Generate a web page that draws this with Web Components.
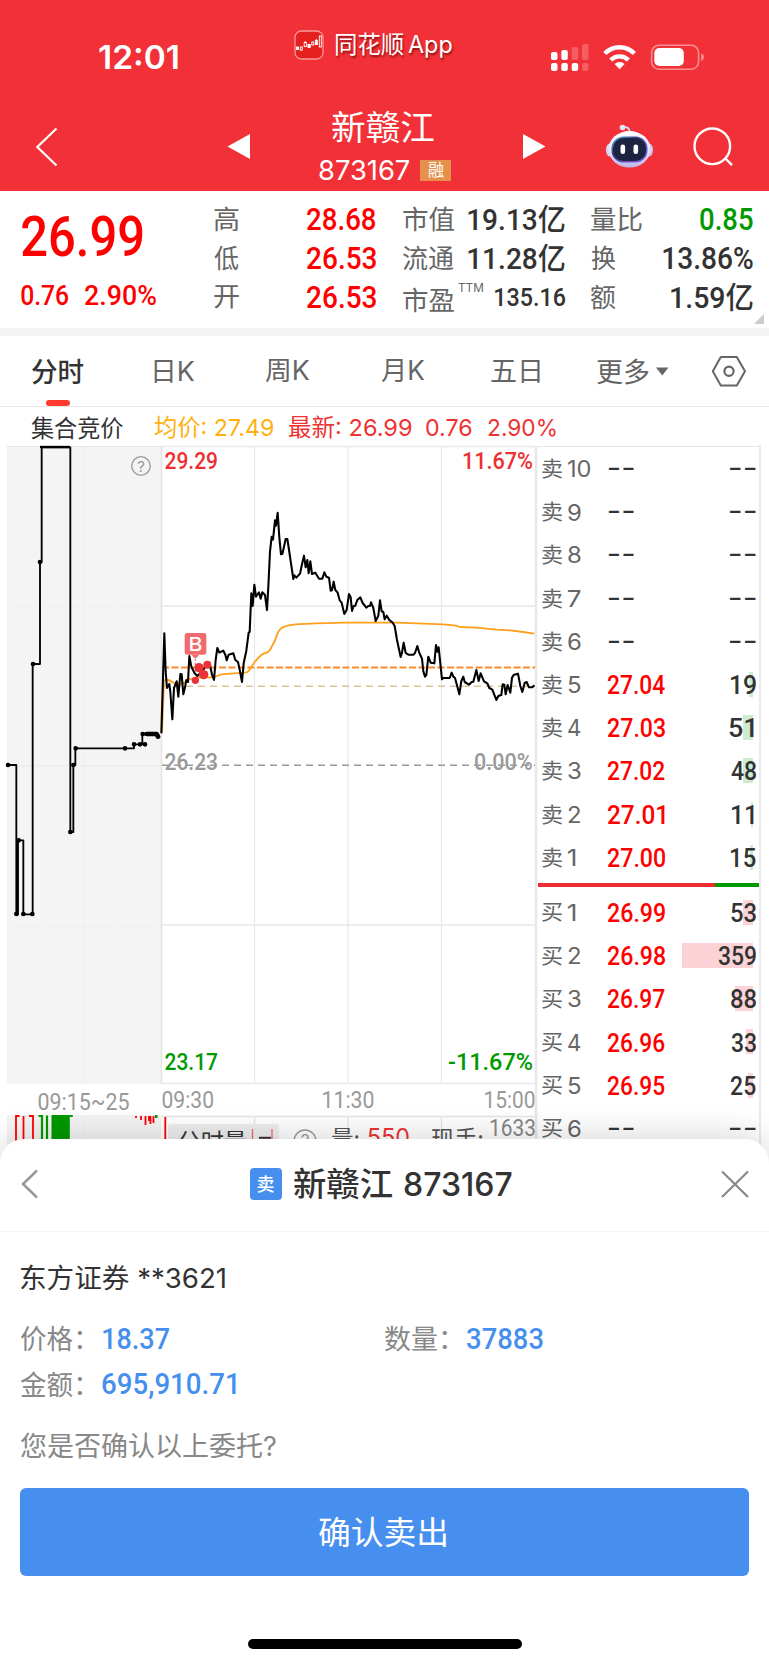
<!DOCTYPE html>
<html lang="zh-CN">
<head>
<meta charset="utf-8">
<title>新赣江 873167</title>
<style>
  html, body { margin: 0; padding: 0; background: #fff; }
  body { width: 769px; height: 1665px; overflow: hidden; font-family: Inter, "Noto Sans CJK SC", sans-serif; color: #333; }
</style>
</head>
<body>
<trade-screen></trade-screen>

<script>
/* Text whose box is its ink: w = drawn width, s = font size, f = din|ui, b = weight, ml = gap before */
const pen = document.createElement('canvas').getContext('2d');
const FACES = {
  din: 'Roboto, "Noto Sans CJK SC", sans-serif',
  ui: 'Inter, "Noto Sans CJK SC", sans-serif'
};
class FitText extends HTMLElement {
  connectedCallback() {
    if (this.shadowRoot) return;
    const root = this.attachShadow({ mode: 'open' });
    const size = +this.getAttribute('s') || 24;
    const weight = this.getAttribute('b') || 400;
    const face = FACES[this.getAttribute('f') || 'ui'];
    const ml = this.getAttribute('ml') || 0;
    const text = this.textContent;
    pen.font = `${weight} ${size}px ${face}`;
    const m = pen.measureText(text);
    const inkW = m.actualBoundingBoxLeft + m.actualBoundingBoxRight;
    const inkH = m.actualBoundingBoxAscent + m.actualBoundingBoxDescent;
    const w = +this.getAttribute('w') || inkW;
    const k = w / inkW;
    const line = Math.ceil(size * 1.4);
    const a = m.fontBoundingBoxAscent, d = m.fontBoundingBoxDescent;
    const base = (line - a - d) / 2 + a;
    root.innerHTML = `<style>
      :host { display: block; flex: none; width: ${w}px; height: ${inkH}px; margin-left: ${ml}px; }
      span { display: block; width: max-content; white-space: pre; font: ${weight} ${size}px/${line}px ${face};
        transform-origin: 0 0;
        transform: translate(${m.actualBoundingBoxLeft * k}px, ${m.actualBoundingBoxAscent - base}px) scaleX(${k}); }
    </style><span><slot></slot></span>`;
  }
}
customElements.define('fit-text', FitText);

const define = (name, html) => {
  const t = document.createElement('template');
  t.innerHTML = html;
  customElements.define(name, class extends HTMLElement {
    constructor() {
      super();
      this.attachShadow({ mode: 'open' }).append(t.content.cloneNode(true));
    }
  });
};

define('status-bar', `
<style>
  :host { display: flex; height: 88px; color: #fff; align-items: flex-start; }
  .time { margin: 45px 0 0 99px; }
  .app { margin: 29px 0 0 116px; display: flex; align-items: center; height: 31px; text-shadow: 1px 2px 2px rgba(90,0,0,.65); }
  .app fit-text { margin-top: 1px; }
  .sys { margin: 43px 0 0 95px; }
  svg { display: block; flex: none; }
</style>
<div class="time"><fit-text w="79" s="33" b="600">12:01</fit-text></div>
<div class="app">
  <svg width="30" height="30" viewBox="0 0 30 30">
    <rect x="1" y="1" width="28" height="28" rx="6.5" fill="#e5201f" stroke="#f79a9b" stroke-width="1.3"/>
    <g stroke="#fff" stroke-width=".9" fill="none">
      <rect x="2.5" y="17" width="2" height="2.5" fill="#fff"/><rect x="6.3" y="17" width="2" height="3"/>
      <rect x="10.2" y="12.5" width="2.2" height="4"/><rect x="14" y="14.5" width="2.2" height="3" fill="#fff"/>
      <rect x="17.8" y="12" width="2" height="3"/><rect x="21.4" y="10.5" width="2" height="4" fill="#fff"/>
      <rect x="25.3" y="6" width="2" height="11"/><path d="M7.3 20v1M11.3 11v1.5M22.4 9v2"/>
    </g>
  </svg>
  <fit-text w="119" s="24" ml="12" style="word-spacing:-3px">同花顺 App</fit-text>
</div>
<svg class="sys" width="156" height="30" viewBox="550 43 156 30">
  <g fill="#fff">
    <rect x="551" y="52" width="6.5" height="8" rx="2"/><rect x="561.3" y="50" width="6.5" height="10" rx="2"/>
    <rect x="551" y="63" width="6.5" height="8" rx="2"/><rect x="561.3" y="63" width="6.5" height="8" rx="2"/><rect x="571.7" y="63" width="6.5" height="8" rx="2"/>
    <g opacity=".22"><rect x="571.7" y="47" width="6.5" height="13" rx="2"/><rect x="582" y="44" width="6.5" height="16" rx="2"/><rect x="582" y="63" width="6.5" height="8" rx="2"/></g>
  </g>
  <g fill="none" stroke="#fff" stroke-width="4.4">
    <path d="M604.8 53.5a20.5 20.5 0 0 1 29.6 0"/><path d="M610.8 60a12.5 12.5 0 0 1 17.6 0"/>
  </g>
  <path d="M619.6 69.3l-5-5.2a7.3 7.3 0 0 1 10 0z" fill="#fff"/>
  <rect x="651.6" y="45.2" width="47" height="24" rx="7.5" fill="none" stroke="#fff" stroke-opacity=".45" stroke-width="1.6"/>
  <rect x="654.3" y="48" width="29.5" height="18" rx="5" fill="#fff"/>
  <path d="M701.3 53.5c3.4 1 3.4 6.200 0 7.200z" fill="#fff" opacity=".5"/>
</svg>`);

define('stock-nav', `
<style>
  :host { display: flex; height: 103px; color: #fff; align-items: flex-start; }
  svg { display: block; flex: none; }
  .title { display: flex; flex-direction: column; width: 134px; margin-left: 69px; }
  .name { margin: 22px 0 0 13px; }
  .code { display: flex; align-items: center; height: 22px; margin-top: 15px; }
  .badge { background: #e5914b; width: 31px; height: 21px; margin-left: 11px; display: flex; align-items: center; justify-content: center; }
</style>
<svg style="margin:39px 0 0 34px" width="26" height="42" viewBox="34 127 26 42"><path d="M56.500 128.500L37.300 147l19.200 18.500" fill="none" stroke="#fff" stroke-width="2.200"/></svg>
<svg style="margin:44px 0 0 167px" width="23" height="28" viewBox="227 132 23 28"><path d="M227.500 146.500L250 134v25z" fill="#fff"/></svg>
<div class="title">
  <div class="name"><fit-text w="102" s="34">新赣江</fit-text></div>
  <div class="code"><fit-text w="90" s="27">873167</fit-text><div class="badge"><fit-text w="16" s="17">融</fit-text></div></div>
</div>
<svg style="margin:44px 0 0 70px" width="23" height="28" viewBox="523 132 23 28"><path d="M545.500 146.500L523 134v25z" fill="#fff"/></svg>
<svg style="margin:36px 0 0 59px" width="50" height="46" viewBox="0 0 50 46">
  <defs><linearGradient id="h" x1="0" y1="0" x2="0" y2="1"><stop offset="0" stop-color="#fff"/><stop offset=".6" stop-color="#e3e2f6"/><stop offset="1" stop-color="#b9b6e6"/></linearGradient>
  <linearGradient id="s" x1="0" y1="0" x2="1" y2="1"><stop offset="0" stop-color="#55c3e8"/><stop offset=".35" stop-color="#3d3f86"/><stop offset="1" stop-color="#8f5bf0"/></linearGradient></defs>
  <path d="M18 3.500c4-1 6.500.5 6.800 4.500" fill="none" stroke="#d3dcef" stroke-width="1.800"/>
  <circle cx="17.500" cy="3.500" r="2.800" fill="#dfe9f7"/>
  <ellipse cx="4.500" cy="26" rx="3.500" ry="6.500" fill="#d9d5f1"/><ellipse cx="44.500" cy="26" rx="3.500" ry="6.500" fill="#c9c4ee"/>
  <ellipse cx="24.500" cy="25.300" rx="21" ry="18.300" fill="url(#h)"/>
  <rect x="6.500" y="12.500" width="36" height="26" rx="12" fill="url(#s)"/>
  <rect x="8" y="14" width="33" height="23" rx="10.500" fill="#1c2441"/>
  <rect x="15.500" y="20.500" width="4.600" height="9.500" rx="2.200" fill="#fff"/><rect x="28.500" y="20.500" width="4.600" height="9.500" rx="2.200" fill="#fff"/>
</svg>
<svg style="margin:38px 0 0 37px" width="42" height="42" viewBox="692 126 42 42"><g fill="none" stroke="#fff" stroke-width="2.400"><circle cx="712.300" cy="146.300" r="17.800"/><path d="M725.500 158.500l6.500 6.700"/></g></svg>`);

define('quote-panel', `
<style>
  :host { display: flex; height: 137px; border-bottom: 8px solid #f4f4f4; color: #333; position: relative; }
  .last { width: 214px; color: #f00; }
  .big { margin: 24px 0 0 22px; }
  .chg { display: flex; margin: 28px 0 0 21px; }
  .col { display: grid; grid-template-rows: 39px 39px 39px; padding-top: 8.500px; }
  .r { display: flex; align-items: center; justify-content: space-between; }
  .l { color: #666; } .red { color: #f00; } .green { color: #090; }
  .c1 { width: 162px; } .c2 { width: 162px; margin-left: 27px; } .c3 { width: 162px; margin-left: 26px; }
  .sup { align-self: flex-start; margin: 5px 0 0 -8px; }
  .corner { position: absolute; right: 5px; bottom: 4px; width: 10px; height: 10px; background: #ccc; clip-path: polygon(100% 0, 100% 100%, 0 100%); }
</style>
<div class="last">
  <div class="big"><fit-text f="din" b="500" w="121" s="55">26.99</fit-text></div>
  <div class="chg"><fit-text f="din" b="500" w="48" s="28.500">0.76</fit-text><fit-text f="din" b="500" w="71" s="28.500" ml="16">2.90%</fit-text></div>
</div>
<div class="col c1">
  <div class="r l"><fit-text w="25" s="26">高</fit-text><fit-text class="red" f="din" b="500" w="69" s="31">28.68</fit-text></div>
  <div class="r l"><fit-text w="25" s="26">低</fit-text><fit-text class="red" f="din" b="500" w="69" s="31">26.53</fit-text></div>
  <div class="r l"><fit-text w="25" s="26">开</fit-text><fit-text class="red" f="din" b="500" w="69" s="31">26.53</fit-text></div>
</div>
<div class="col c2">
  <div class="r"><fit-text class="l" w="51" s="26">市值</fit-text><fit-text f="din" b="500" w="97" s="30">19.13亿</fit-text></div>
  <div class="r"><fit-text class="l" w="51" s="26">流通</fit-text><fit-text f="din" b="500" w="97" s="30">11.28亿</fit-text></div>
  <div class="r"><fit-text class="l" w="51" s="26" style="position:relative;top:3px">市盈</fit-text><div class="sup l"><fit-text w="25" s="12">TTM</fit-text></div><fit-text f="din" b="500" w="70" s="26.500">135.16</fit-text></div>
</div>
<div class="col c3">
  <div class="r"><fit-text class="l" w="51" s="26">量比</fit-text><fit-text class="green" f="din" b="500" w="53" s="31">0.85</fit-text></div>
  <div class="r"><fit-text class="l" w="25" s="26">换</fit-text><fit-text f="din" b="500" w="90" s="31">13.86%</fit-text></div>
  <div class="r"><fit-text class="l" w="25" s="26">额</fit-text><fit-text f="din" b="500" w="82" s="30">1.59亿</fit-text></div>
</div>
<i class="corner"></i>`);

define('chart-tabs', `
<style>
  :host { display: flex; align-items: center; height: 70px; border-bottom: 1px solid #e8e8e8; color: #666; }
  .on { color: #333; height: 70px; display: flex; flex-direction: column; align-items: center; justify-content: space-between; margin-left: 32px; box-sizing: border-box; padding-top: 22px; }
  .on i { width: 24px; height: 6px; border-radius: 3px; background: #ff3b30; }
  svg { flex: none; display: block; }
</style>
<div class="on"><fit-text w="52" s="27" b="500">分时</fit-text><i></i></div>
<fit-text w="41" s="26.500" ml="70">日K</fit-text>
<fit-text w="45" s="26.500" ml="70">周K</fit-text>
<fit-text w="44" s="26.500" ml="71">月K</fit-text>
<fit-text w="49" s="27" ml="66">五日</fit-text>
<fit-text w="52" s="27" ml="57">更多</fit-text>
<svg style="margin-left:7px" width="13" height="9"><path d="M0 .5h12.500L6.250 8.500z" fill="#666"/></svg>
<svg style="margin-left:42px" width="36" height="34" viewBox="0 0 36 34"><path d="M9.800 3h16L34 17.300 25.800 31.500h-16L1.800 17.300z" fill="none" stroke="#666" stroke-width="2" stroke-linejoin="round"/><circle cx="18" cy="17.300" r="4.600" fill="none" stroke="#666" stroke-width="2.200"/></svg>`);

define('info-line', `
<style>
  :host { display: flex; align-items: center; height: 38px; padding-top: 2px; box-sizing: border-box; color: #ee3333; }
</style>
<fit-text w="92" s="23.500" ml="31" style="color:#333;position:relative;top:1px">集合竞价</fit-text>
<fit-text w="120" s="23.500" ml="31" style="color:#ffb00f">均价: 27.49</fit-text>
<fit-text w="123" s="23.500" ml="15">最新: 26.99</fit-text>
<fit-text w="46" s="23.500" ml="14">0.76</fit-text>
<fit-text w="68" s="23.500" ml="16">2.90%</fit-text>`);

define('price-chart', `
<style>
  :host { display: block; width: 537px; height: 718px; }
  svg { display: block; overflow: visible; }
  text { font-family: Roboto, "Noto Sans CJK SC", sans-serif; font-size: 24px; font-weight: 500; }
</style>
<svg width="537" height="718" viewBox="0 445 537 718">
  <rect x="7" y="446" width="154" height="638" fill="#f4f4f4"/>
  <g stroke="#e4e4e4" fill="none">
    <path d="M161.500 446.500H535M161.500 606H535M161.500 925H535M161.500 1083.500H536M254.500 446v638M348 446v638M441.500 446v638" stroke-width="1.300" stroke="#e9e9e9"/>
    <path d="M161.500 446v638" stroke-width="1.500"/><path d="M536 446v717" stroke="#e8e8e8" stroke-width="2.600"/>
    <path d="M84.500 446v638M7 607h154M7 927h154" stroke-width="1.200" stroke-dasharray="1.500 3" stroke="#e6e6e6"/>
    <path d="M7 766h154" stroke="#ebebeb"/><path d="M7 446.500h154"/>
  </g>
  <path d="M162 765.300H535" stroke="#999" stroke-width="1.500" stroke-dasharray="7 5"/>
  <path d="M162 686.200H535" stroke="#e0c294" stroke-width="1.600" stroke-dasharray="7 5"/>
  <path d="M162 667.500H535" stroke="#ff8a2b" stroke-width="2" stroke-dasharray="7 2.500"/>

  <g transform="translate(0 440) scale(.33333)" fill="none" stroke="#000" stroke-width="5.500" stroke-linejoin="round">
    <path d="M22 975H49V1423H54V1201H70V1423H98V672H120V366H125V22H211V1176H220V975H226V925H375H402V913H435H427V882H472L476 892"/>
    <g stroke-width="14" stroke-linecap="round"><path d="M24 975h.1M49 1422h.1M56 1201h.1M70 1422h.1M97 1422h.1M99 672h.1M120 366h.1M211 1176h.1M220 975h.1M227 925h.1M375 925h.1M402 913h.1M420 913h.1M435 913h.1M428 882h.1M440 882H470L474 890"/></g>
    <path d="M120 21h90" stroke-width="7"/>
  </g>

  <g transform="translate(150 480) scale(.33333)" fill="none" stroke-linejoin="round">
    <path d="M36 760L42 600H54C64 601 68 612 82 612C96 612 108 608 118 598L150 592L190 592C200 590 204 584 216 583L250 580L290 577C300 574 302 560 312 549C322 536 330 526 342 520C352 516 356 518 360 510C366 498 368 494 374 484C380 468 382 454 392 446C402 438 416 436 430 434C470 430 520 430 580 428H740L800 430L880 433L918 437L930 441L980 443L1040 449L1080 451L1120 456L1153 461" stroke="#ffa01c" stroke-width="5.500"/>
    <path d="M34 760L40 560L43 460L47 575L51 624L58 612L61 636L67 718L72 624L80 604L85 650L91 582L95 583L100 643L105 622L109 600L114 606L118 528L124 560L134 580L142 588L152 578L162 566L168 556H180L186 584L192 600L197 540L202 504L208 518L220 512L226 524L230 541L236 524L250 520L256 540L264 546L270 574L276 606L281 550L289 512L296 458L299 456L304 340L308 378L313 314L318 350L327 337L332 356L337 337L345 345L351 390L355 320L360 215L365 170L369 179L375 121L378 137L383 98L388 172L393 223L397 222L403 196L407 177L412 177L418 216L423 250L430 297L433 286L439 293L450 281L457 248L462 227L467 262L472 240L476 280L481 244L486 282L496 278L507 296L517 296L523 277L529 290L537 293L542 332L546 331L551 305L556 330L563 338L569 361L575 368L583 402L590 390L597 342L602 352L606 393L611 378L616 377L622 360L631 352L638 369L649 383L655 378L660 378L663 367L670 384L677 423L685 407L690 361L695 394L700 396L704 418L710 407L718 420L728 428L734 438L741 480L752 531L756 518L761 488L767 519L775 524H790L795 519L802 498L808 519L816 536L820 574L825 590L829 585L835 530L842 548L853 550L858 495L862 515L866 502L876 598L880 594H899L905 578L910 590L915 594L920 612L928 643L934 603L940 590L944 606L957 614L965 606L970 605L979 570L986 603L992 580L1002 604L1012 610L1018 624L1027 629L1039 660L1045 648L1054 645L1058 613L1063 614L1067 643L1073 615L1081 638L1086 593L1092 584L1104 581L1111 618L1117 636L1124 609L1130 606L1137 622L1147 622L1153 616" stroke="#000" stroke-width="6.200"/>
    <path d="M136 526v50" stroke="#f06b6e" stroke-width="3" stroke-dasharray="6 5"/>
    <path d="M124 524h24l-12 12z" fill="#f06b6e"/>
    <rect x="104" y="459" width="65" height="65" rx="7" fill="#f06b6e"/>
    <g fill="#ea3338"><circle cx="147" cy="563" r="14"/><circle cx="172" cy="554" r="12"/><circle cx="161" cy="584" r="14"/><circle cx="136" cy="601" r="11"/></g>
  </g>
  <text x="188.500" y="651.200" style="font:500 19px Inter" fill="#fff" textLength="14" lengthAdjust="spacingAndGlyphs">B</text>

  <g stroke="#999" fill="none"><circle cx="141" cy="466" r="9.300" stroke-width="1.300"/></g>
  <text x="141" y="471.500" text-anchor="middle" style="font:400 15px Inter" fill="#999">?</text>

  <text x="164.500" y="469.300" fill="#ee2f32" textLength="53.500" lengthAdjust="spacingAndGlyphs">29.29</text>
  <text x="462" y="469.300" fill="#ee2f32" textLength="71" lengthAdjust="spacingAndGlyphs">11.67%</text>
  <text x="164.500" y="769.800" fill="#999" textLength="53.500" lengthAdjust="spacingAndGlyphs">26.23</text>
  <text x="474" y="769.800" fill="#999" textLength="58.500" lengthAdjust="spacingAndGlyphs">0.00%</text>
  <text x="164.500" y="1070" fill="#090" textLength="53.500" lengthAdjust="spacingAndGlyphs">23.17</text>
  <text x="448" y="1070" fill="#090" textLength="85" lengthAdjust="spacingAndGlyphs">-11.67%</text>
  <g fill="#999">
    <text x="37.500" y="1109.500" style="font-weight:400" textLength="92" lengthAdjust="spacingAndGlyphs">09:15~25</text>
    <text x="161.500" y="1107.500" style="font-weight:400" textLength="52.500" lengthAdjust="spacingAndGlyphs">09:30</text>
    <text x="321.500" y="1107.500" style="font-weight:400" textLength="53" lengthAdjust="spacingAndGlyphs">11:30</text>
    <text x="483.500" y="1107.500" style="font-weight:400" textLength="52" lengthAdjust="spacingAndGlyphs">15:00</text>
  </g>

  <rect x="7" y="1115" width="154" height="48" fill="#f4f4f4"/>
  <path d="M161.500 1116.500H535M254.500 1116v47M348 1116v47M441.500 1116v47" stroke="#e5e5e5" stroke-width="1.300"/>
  <path d="M84.500 1116v47" stroke="#e2e2e2" stroke-dasharray="1.500 3"/>
  <path d="M16 1163v-47h3.500M23.500 1163v-47M29 1116h4v47M136 1116v2M141 1116v4M145.500 1116v9M149 1116v5M150.500 1116v8M153.500 1116v7M165.300 1117v46" stroke="#f00" stroke-width="1.800" fill="none"/>
  <path d="M38.500 1116h3.500v47M47 1115.500v47" stroke="#090" stroke-width="2.200" fill="none"/>
  <rect x="51.500" y="1115" width="18.300" height="48" fill="#090"/><path d="M155 1115h2.500v3h-2.500zM69.800 1115h3v2h-3z" fill="#090"/>
  <rect x="168" y="1124" width="111" height="39" rx="3" fill="#eee"/>
  <text x="177.500" y="1151" fill="#333" style="font-weight:400" textLength="69.500" lengthAdjust="spacingAndGlyphs">分时量</text>
  <path d="M252.500 1129v30M272 1129v30" stroke="#f06b6e" stroke-width="1.300"/><path d="M259 1137.800h12" stroke="#333" stroke-width="2"/>
  <circle cx="305" cy="1141" r="11" fill="none" stroke="#999" stroke-width="1.300"/><text x="305" y="1147" text-anchor="middle" style="font:400 17px Inter" fill="#999">?</text>
  <text x="331" y="1148" style="font:400 24px Inter,'Noto Sans CJK SC'" fill="#555" textLength="29" lengthAdjust="spacingAndGlyphs">量:</text>
  <text x="367" y="1146" style="font:400 24px Inter" fill="#e33" textLength="43" lengthAdjust="spacingAndGlyphs">550</text>
  <text x="431" y="1148" style="font:400 24px Inter,'Noto Sans CJK SC'" fill="#555" textLength="53" lengthAdjust="spacingAndGlyphs">现手:</text>
  <text x="489" y="1136" fill="#888" style="font-weight:400" textLength="47" lengthAdjust="spacingAndGlyphs">1633</text>
</svg>`);

/* One depth level: side + level, price, volume and its proportional bar */
class BookRow extends HTMLElement {
  connectedCallback() {
    if (this.shadowRoot) return;
    const g = n => this.getAttribute(n);
    const empty = !g('price');
    const n = g('n'), vol = g('vol') || '--';
    const vw = empty ? 27 : vol === '11' ? 22 : ({ 2: 25, 3: 38 })[vol.length];
    const vr = vol === '11' || vol === '51' ? 2 : 0;
    const dash = empty ? 'f="ui" b="400" s="27"' : 'f="din" b="500" s="25"';
    this.attachShadow({ mode: 'open' }).innerHTML = `<style>
      :host { display: flex; align-items: center; height: 43.2px; padding: 0 3px 0 5px; color: #333; position: relative; }
      .k { color: #666; width: 66px; display: flex; align-items: center; }
      .p { color: ${empty ? '#333' : '#f00'}; flex: 1; }
      .v { position: relative; padding-right: ${vr}px; }
      .bar { position: absolute; right: 6px; top: 9px; height: 25px; width: ${g('bar') || 0}px; background: ${g('side') === '卖' ? '#cdebcf' : '#fbd3d6'}; }
    </style>
    <i class="bar"></i>
    <div class="k"><fit-text w="20" s="21">${g('side')}</fit-text><fit-text ml="${/^1/.test(n) ? 6 : 5.5}" w="${n === '10' ? 23 : n === '1' ? 8 : 12.5}" s="23">${n}</fit-text></div>
    <div class="p"><fit-text ${dash} w="${empty ? 26 : 57}">${g('price') || '--'}</fit-text></div>
    <div class="v"><fit-text ${dash} w="${vw}">${vol}</fit-text></div>`;
  }
}
customElements.define('book-row', BookRow);

define('order-book', `
<style>
  :host { display: block; width: 224px; box-sizing: border-box; height: 718px; padding-top: 1px; border-right: 2px solid #ebebeb; overflow: hidden; }
  .rule { height: 1px; background: #e6e6e6; }
  .ratio { display: flex; height: 4px; margin: 4px 0 4px 1px; }
  .ratio i:first-child { width: 177px; background: #ee2f32; } .ratio i:last-child { flex: 1; background: #090; }
</style>
<div class="rule"></div>
<book-row side="卖" n="10"></book-row><book-row side="卖" n="9"></book-row><book-row side="卖" n="8"></book-row><book-row side="卖" n="7"></book-row><book-row side="卖" n="6"></book-row>
<book-row side="卖" n="5" price="27.04" vol="19" bar="4"></book-row>
<book-row side="卖" n="4" price="27.03" vol="51" bar="10.5"></book-row>
<book-row side="卖" n="3" price="27.02" vol="48" bar="10"></book-row>
<book-row side="卖" n="2" price="27.01" vol="11" bar="2"></book-row>
<book-row side="卖" n="1" price="27.00" vol="15" bar="3"></book-row>
<div class="ratio"><i></i><i></i></div>
<book-row side="买" n="1" price="26.99" vol="53" bar="10.5"></book-row>
<book-row side="买" n="2" price="26.98" vol="359" bar="71"></book-row>
<book-row side="买" n="3" price="26.97" vol="88" bar="18"></book-row>
<book-row side="买" n="4" price="26.96" vol="33" bar="7"></book-row>
<book-row side="买" n="5" price="26.95" vol="25" bar="5"></book-row>
<book-row side="买" n="6"></book-row>`);

define('confirm-sheet', `
<style>
  :host { display: block; height: 526px; background: #fff; border-radius: 24px 24px 0 0; box-shadow: 0 -2px 34px rgba(0,0,0,.17); position: relative; color: #333; }
  header { height: 93px; padding-bottom: 3px; border-bottom: 1px solid #f5f5f5; display: flex; align-items: center; box-sizing: border-box; }
  svg { display: block; flex: none; }
  .badge { width: 32px; height: 32px; border-radius: 4px; background: #468fee; color: #fff; display: flex; align-items: center; justify-content: center; margin-left: 210px; }
  .line { display: flex; align-items: center; height: 46px; }
  .g { color: #888; } .b { color: #468fee; }
  .btn { margin: 20px 0 0 20px; width: 729px; height: 88px; border-radius: 6px; background: #468fee; color: #fff; display: flex; align-items: center; justify-content: center; }
  .home { width: 274px; height: 10px; border-radius: 5px; background: #000; margin: 63px 0 0 248px; }
</style>
<header>
  <svg style="margin-left:20px" width="20" height="32" viewBox="0 0 20 32"><path d="M17 2.500L3 16l14 13.500" fill="none" stroke="#999" stroke-width="2.600"/></svg>
  <div class="badge"><fit-text w="17" s="18" b="500">卖</fit-text></div>
  <fit-text ml="12" w="98" s="33" b="500">新赣江</fit-text>
  <fit-text ml="12" w="108" s="33" b="500">873167</fit-text>
  <svg style="margin-left:208px" width="30" height="30" viewBox="0 0 30 30"><path d="M2 2.500l26 25.500M28 2.500L2 28" stroke="#888" stroke-width="2.200"/></svg>
</header>
<div class="line" style="padding-top:22px"><fit-text ml="20" w="205" s="27">东方证券 **3621</fit-text></div>
<div class="line" style="padding-top:15px"><fit-text class="g" ml="20" w="62" s="27">价格：</fit-text><fit-text class="b" f="din" b="500" ml="21" w="66" s="30">18.37</fit-text>
<fit-text class="g" ml="216" w="62" s="27">数量：</fit-text><fit-text class="b" f="din" b="500" ml="20" w="76" s="30">37883</fit-text></div>
<div class="line"><fit-text class="g" ml="20" w="62" s="27">金额：</fit-text><fit-text class="b" f="din" b="500" ml="20" w="134" s="30" style="position:relative;top:2px">695,910.71</fit-text></div>
<div class="line" style="padding-top:15px"><fit-text class="g" ml="20" w="256" s="27">您是否确认以上委托?</fit-text></div>
<div class="btn"><fit-text w="127" s="32" style="margin-right:4px">确认卖出</fit-text></div>
<div class="home"></div>`);

define('trade-screen', `
<style>
  :host { display: block; width: 769px; height: 1665px; overflow: hidden; background: #fff; }
  .top { background: #f23037; height: 191px; }
  .market { display: flex; height: 718px; }
  confirm-sheet { margin-top: -24px; }
</style>
<div class="top"><status-bar></status-bar><stock-nav></stock-nav></div>
<quote-panel></quote-panel>
<chart-tabs></chart-tabs>
<info-line></info-line>
<div class="market"><price-chart></price-chart><order-book></order-book></div>
<confirm-sheet></confirm-sheet>`);
</script>
</body>
</html>
